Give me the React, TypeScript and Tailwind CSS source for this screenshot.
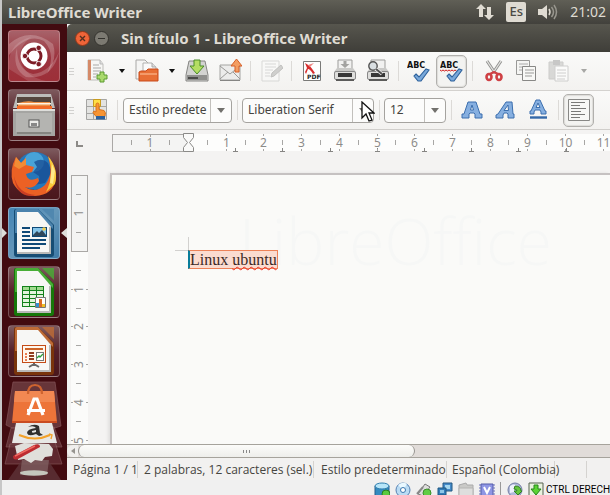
import React, { useEffect, useRef, useState } from "react";

const ui = "font-['Noto_Sans','Open_Sans',sans-serif]";

/* ---------- launcher ---------- */

function Tile({ label, tone, children }: { label: string; tone: string; children: React.ReactNode }) {
  return (
    <button
      type="button"
      aria-label={label}
      className={`block size-[52px] shrink-0 overflow-hidden rounded-[4px] border border-white/25 ${tone}`}
    >
      <svg viewBox="1 1 50 50" className="block size-full">
        {children}
      </svg>
    </button>
  );
}

const plum = "bg-linear-to-b from-[#7d5a5e] via-[#552028] to-[#4a171c]";

function DocShape({ edge, dark, children }: { edge: string; dark: string; children: React.ReactNode }) {
  return (
    <>
      <path d="M8 2h22l16 16v29a3 3 0 0 1-3 3H9a3 3 0 0 1-3-3V4a2 2 0 0 1 2-2z" fill={dark} />
      <path d="M34 2h12v12z" fill={edge} opacity=".8" />
      <path d="M7 4a2 2 0 0 1 2-2h21l15 16v4L29 6H9v20H7z" fill={edge} />
      <path d="M9 5h21l13 15v27H9z" fill="#f7f7f5" />
      <path d="M9 45h34v2H9zM41 20h2v26h-2z" fill="#b9b9b7" />
      {children}
    </>
  );
}

function Launcher() {
  return (
    <nav aria-label="Lanzador" className="relative flex w-[65px] shrink-0 flex-col items-start gap-[7px] overflow-hidden bg-[#420b10] pt-[6px] pl-[6px]">
      <Tile label="Inicio" tone="bg-linear-to-b from-[#a7626a] via-[#9c3540] to-[#9d2f38]">
        <path d="M1 14Q22-4 45 14Q50 30 38 45Q49 25 36 11Q20 2 1 25z" fill="#fff" opacity=".22" />
        <path d="M51 22Q45 50 18 47Q3 38 9 18Q9 40 25 44Q42 42 51 22z" fill="#fff" opacity=".2" />
        <path d="M1 39Q-1 13 23 7Q7 20 14 35Q20 47 38 51H20z" fill="#fff" opacity=".13" />
        <circle cx="26" cy="26" r="13.5" fill="#fff" />
        <circle cx="26" cy="26" r="7" fill="none" stroke="#7d1c26" strokeWidth="3" />
        <g stroke="#fff" strokeWidth="1.4">
          <path d="M26 26h-11M26 26l6-10M26 26l6 10" />
        </g>
        <circle cx="26" cy="26" r="5" fill="#fff" />
        <g fill="#7d1c26" stroke="#fff" strokeWidth=".8">
          <circle cx="17" cy="26" r="2.7" />
          <circle cx="30.7" cy="17.9" r="2.7" />
          <circle cx="30.7" cy="34.1" r="2.7" />
        </g>
      </Tile>
      <Tile label="Archivos" tone={plum}>
        <path d="M9 5h34l4 14H5z" fill="#bcbcb9" />
        <path d="M9 8h34v10H9z" fill="#54453d" />
        <path d="M10 14q10-3 16-1h16v8H10z" fill="#ee9147" />
        <path d="M9 14h34v1.5H9z" fill="#fff3e3" />
        <path d="M9 17h35v5H9z" fill="#f36b27" />
        <path d="M5 20h42v27H5z" fill="#a5a5a2" />
        <path d="M5 20h42v2H5z" fill="#dededb" />
        <path d="M8 24h36v19H8z" fill="#b4b4b1" />
        <rect x="21" y="31" width="10" height="7" fill="#ececea" stroke="#555" />
        <path d="M23 34h6v3h-6z" fill="#888" />
        <path d="M9 43h34v2H9z" fill="#858581" />
      </Tile>
      <Tile label="Firefox" tone={plum}>
        <circle cx="27" cy="23" r="19" fill="#2577ba" />
        <circle cx="26" cy="14" r="10" fill="#54b2e2" opacity=".75" />
        <path d="M26 14q8-5 14 1l4 9-7 11-11 2q7-4 5-9l-6-4 4-5z" fill="#174b91" opacity=".75" />
        <path d="M40 9q9 11 8 22-3 16-21 17Q12 48 5 35 1 22 8 9l5 6 5-5v7l8 2-2 5-6 2q2 9 12 4l1 3q-5 9-14 6 10 7 20-2 9-11 3-28z" fill="#ec6124" />
        <path d="M40 8q11 13 7 28l-9 8q9-18 2-36z" fill="#f8c93a" />
        <path d="M6 28q4 18 22 19-19 5-22-19z" fill="#c93e23" />
        <path d="M8 9l5 6 5-5v7l-7 4-5-3z" fill="#f28c35" />
        <path d="M44 16l3 7-2 13-3-1 1-10z" fill="#ffe888" />
      </Tile>
      <Tile label="LibreOffice Writer" tone="bg-linear-to-br from-[#4284b4] via-[#6597b9] to-[#3d79a6]">
        <DocShape edge="#4b83ad" dark="#174d74">
          <g fill="#0e4977">
            <path d="M14 20h8v2h-8zM14 24h8v2h-8zM14 28h8v2h-8zM14 32h24v2H14zM14 36h24v2H14zM14 40h18v2H14z" />
            <path d="M24 20h15v10H24z" />
          </g>
          <path d="M25 21h13v8H25z" fill="#85c5e9" />
          <circle cx="36" cy="22" r="1.8" fill="#f6cd4c" />
          <path d="M25 28l4-4 2 2 3-3 4 5v1H25z" fill="#30475a" />
        </DocShape>
      </Tile>
      <Tile label="LibreOffice Calc" tone={plum}>
        <DocShape edge="#48ae35" dark="#167809">
          <path d="M14 20h22v21H14z" fill="#13821b" />
          {[21, 25, 29, 33, 37].map((y) => (
            <path key={y} d={`M15 ${y}h6v3h-6zM22 ${y}h6v3h-6zM29 ${y}h6v3h-6z`} fill={y === 21 ? "#a1db8f" : "#e4f4dd"} />
          ))}
          <path d="M27.5 31.5h10v10h-10z" fill="#fff" stroke="#777" />
          <path d="M28 37h3v4h-3z" fill="#3492d1" />
          <path d="M31 33h3v8h-3z" fill="#d96c24" />
          <path d="M34 38h3v3h-3z" fill="#edbe26" />
        </DocShape>
      </Tile>
      <Tile label="LibreOffice Impress" tone={plum}>
        <DocShape edge="#be6b36" dark="#79340b">
          <rect x="14.5" y="20.5" width="23" height="17" fill="#fff7ed" stroke="#c44b17" />
          <path d="M17 23h18v2H17z" fill="#cd6427" />
          <path d="M17 28h2v2h-2zM17 31h2v2h-2zM17 34h2v2h-2z" fill="#e97c50" />
          <path d="M21 27h5v2h-5zM21 30h5v2h-5zM21 33h5v2h-5z" fill="#8f3b1d" />
          <rect x="28.5" y="27.5" width="7" height="8" fill="#fff" stroke="#777" />
          <path d="M29 33l2-2 1 1 3-3" fill="none" stroke="#2c9d39" strokeWidth="1.3" />
          <path d="M26 38v2M26 39l-5 3M26 39l5 3" stroke="#666" strokeWidth="2" />
        </DocShape>
      </Tile>
      <button type="button" aria-label="Más aplicaciones" className="-mt-[3px] -ml-[6px] block w-[65px] shrink-0">
        <svg width="65" height="100" viewBox="2 381 65 100" className="block">
          <path d="M13 382h42l6 44-6 2H12l-6-3z" fill="#86585c" opacity=".55" stroke="#b78d90" strokeWidth=".7" />
          <path d="M11 428l-5 19h56l-8-20z" fill="#79484d" opacity=".6" stroke="#a77e80" strokeWidth=".7" />
          <path d="M10 444l-5 20h57l-7-22z" fill="#713b42" opacity=".6" stroke="#a77e80" strokeWidth=".7" />
          <path d="M22 460l-14 20h53l-13-20z" fill="#5e3338" opacity=".8" />
          <path d="M22 460h27l-2 15H20z" fill="#9a8181" opacity=".45" />
          <ellipse cx="34" cy="473" rx="14" ry="2.7" fill="#c4c7bd" />
          <path d="M15 446l9-3 25 1 4 5-1 7-7 1-3 4-7-1-4 3-7-4-6 1z" fill="#e0dfdb" />
          <path d="M13 456l21-11q6-2 6 2l-22 12q-5 2-5-3z" fill="#bd2c31" />
          <path d="M15 456l20-10" stroke="#f06b63" strokeWidth="1.5" />
          <path d="M16 423h36l5 20H12z" fill="#e7e7e5" />
          <path d="M28 427q6-4 11-1l1 7 3 2-4 1-3-2q-8 3-9-1 0-4 9-5-2-3-8-1zm4 4q-1 3 4 1v-2z" fill="#302f2d" fillRule="evenodd" />
          <path d="M19 435q16 7 31 0" fill="none" stroke="#f3a129" strokeWidth="2" />
          <path d="M49 434l3 1-1 4" fill="none" stroke="#f3a129" strokeWidth="1.4" />
          <path d="M15 391h39l3 32H12z" fill="#ed7439" />
          <path d="M15 391h39l1 11H14z" fill="#f28852" />
          <path d="M28 394q0-9 7-9 7 0 7 9" fill="none" stroke="#ce632f" strokeWidth="2.2" />
          <path d="M28 415l6-16h3l6 16" fill="none" stroke="#fff" strokeWidth="3.2" />
          <path d="M27 409h18v3H27z" fill="#fff" />
          <path d="M12 421h45v2H12z" fill="#c94c21" />
        </svg>
      </button>
      <svg aria-hidden="true" width="65" height="12" viewBox="0 0 65 12" className="absolute top-[203px] left-0">
        <path d="M0 1v10l5-5zM65 1v10l-6-5z" fill="#deddd9" />
      </svg>
    </nav>
  );
}

/* ---------- tool bar parts ---------- */

function Tool({ label, children, on = false }: { label: string; children: React.ReactNode; on?: boolean }) {
  return (
    <button
      type="button"
      aria-label={label}
      aria-pressed={on || undefined}
      className={
        on
          ? "mx-px flex h-[33px] w-[31px] shrink-0 items-center justify-center rounded-[5px] border border-[#b1b0ad] bg-[#f3f3f1] shadow-[inset_0_0_1px_1px_#dddcd9]"
          : "flex h-[33px] w-[33px] shrink-0 items-center justify-center"
      }
    >
      <svg width="24" height="24" viewBox="0 0 24 24" className="block shrink-0">
        {children}
      </svg>
    </button>
  );
}

function Drop({ label, faint = false }: { label: string; faint?: boolean }) {
  return (
    <button type="button" aria-label={label} className="flex h-[33px] w-[17px] shrink-0 items-center justify-center">
      <svg width="6" height="4" viewBox="0 0 6 4">
        <path d="M0 0h6L3 4z" fill={faint ? "#a7a7a5" : "#111"} />
      </svg>
    </button>
  );
}

function Sep() {
  return (
    <span className="flex w-2 shrink-0 justify-center">
      <span className="h-5 w-px bg-[#dcdad7]" />
    </span>
  );
}

function Grip() {
  return (
    <span className="flex w-[13px] shrink-0 flex-col items-start gap-[2px] pl-[2px]">
      <i className="h-px w-[5px] bg-[#d2d1cf]" />
      <i className="h-px w-[5px] bg-[#d2d1cf]" />
      <i className="h-px w-[5px] bg-[#d2d1cf]" />
    </span>
  );
}

function Combo({ label, value, width, text = "text-[12px]" }: { label: string; value: string; width: string; text?: string }) {
  return (
    <div className={`flex h-[25px] shrink-0 overflow-hidden rounded-[4px] border border-[#a5a39f] bg-[#fcfcfb] ${width}`}>
      <input
        aria-label={label}
        defaultValue={value}
        className={`min-w-0 flex-1 bg-transparent pl-[5px] text-[#45443f] outline-none ${text}`}
      />
      <button type="button" aria-label={`Abrir ${label}`} className="flex w-[21px] shrink-0 items-center justify-center border-l border-[#c2c0bc]">
        <svg width="8" height="5" viewBox="0 0 8 5">
          <path d="M0 0h8L4 5z" fill="#72716d" />
        </svg>
      </button>
    </div>
  );
}

const check = <path d="M9 15l3 3 7-8 3 1-8 11h-3l-4-5z" fill="#79a8da" stroke="#2d619b" strokeWidth="1.1" />;

function Abc({ wavy = false }: { wavy?: boolean }) {
  return (
    <>
      <text x="0" y="9" className="font-['DejaVu_Sans',sans-serif] text-[8px] font-bold" fill="#111">
        ABC
      </text>
      {wavy && <path d="M0 11l1.5 1 1.5-1 1.5 1 1.5-1 1.5 1 1.5-1 1.5 1 1.5-1 1.5 1 1.5-1 1.5 1" stroke="#d21b1b" fill="none" />}
      {check}
    </>
  );
}

function Printer({ children }: { children: React.ReactNode }) {
  return (
    <>
      <path d="M5 1h14v11H5z" fill="#f1f1f0" stroke="#9d9d9b" />
      <path d="M4 9l-3 4h22l-3-4z" fill="#c9c9c7" />
      <rect x="1.5" y="12.500" width="21" height="8" rx="1.500" fill="#dededc" stroke="#888" />
      <path d="M5 14h14v4H5z" fill="#383838" />
      <path d="M3 20h18v2H3z" fill="#5b5b5a" />
      {children}
    </>
  );
}

function StandardBar() {
  return (
    <div role="toolbar" aria-label="Estándar" className="flex h-[39px] shrink-0 items-center overflow-hidden border-b border-[#d4d2cf] bg-linear-to-b from-[#fafaf9] to-[#f3f2f0]">
      <Grip />
      <Tool label="Nuevo">
        <path d="M3 1h12l3 4v16H3z" fill="#f6f6f4" stroke="#bebdb9" />
        <path d="M3 1h3v20H3z" fill="#d58a68" />
        <path d="M15 1v4h3" fill="#ddd" stroke="#bbb" />
        <path d="M8 6h6M8 9h8M8 12h8M8 15h5M8 18h3" stroke="#aaa9a7" />
        <path d="M15 13h4v3h3v4h-3v3h-4v-3h-3v-4h3z" fill="#a9d96c" stroke="#5b9a30" />
      </Tool>
      <Drop label="Opciones de Nuevo" />
      <Tool label="Abrir">
        <path d="M1 20V1h9l3 3v16z" fill="#f5f5f4" stroke="#a9a8a6" />
        <path d="M8 10V4h9l4 4v6H8z" fill="#fafafa" stroke="#b1b1af" />
        <path d="M17 4v4h4" fill="#ddd" stroke="#aaa" />
        <path d="M4 22V13l2-1h5l2-2h10v12z" fill="#e86f35" stroke="#c94b1b" />
        <path d="M5 14h17v2H5z" fill="#f49a69" />
      </Tool>
      <Drop label="Opciones de Abrir" />
      <Tool label="Guardar">
        <path d="M4 2h16l3 14v6H1v-6z" fill="#d3d3d1" stroke="#858583" />
        <path d="M2 16h20v5H2z" fill="#8f8f8d" />
        <path d="M3 18h10v2H3z" fill="#4b4b49" />
        <path d="M9 1h6v6h4l-7 8-7-8h4z" fill="#b4de63" stroke="#4b8c28" />
      </Tool>
      <Tool label="Enviar por correo">
        <path d="M2 6h20v15H2z" fill="#ececeb" stroke="#a4a4a2" />
        <path d="M2 7l10 8 10-8M2 20l8-7M22 20l-7-7" fill="none" stroke="#999997" />
        <path d="M2 21.500h20" stroke="#858583" />
        <path d="M17 13V7h-4l5.500-7L24 7h-3v6z" fill="#f39d62" stroke="#d65f28" />
      </Tool>
      <Sep />
      <Tool label="Editar archivo">
        <g opacity=".5">
          <path d="M3 2h17v20H3z" fill="#fafaf9" stroke="#bdbdbb" />
          <path d="M6 5h11M6 8h11M6 11h8M6 14h5M6 17h5" stroke="#bbb" />
          <path d="M12 18l1-4 9-8 2 3-9 8z" fill="#aaaaa8" stroke="#8c8c8a" />
        </g>
      </Tool>
      <Sep />
      <Tool label="Exportar a PDF">
        <path d="M3.500 2.500h17v19h-17z" fill="#fff" stroke="#7a7a78" />
        <path d="M5 4q5 2 10 10l-2 1q-3-5-5-5l-2 5-1-2 2-4z" fill="#d72d2e" />
        <path d="M8 6l6-2-4 4z" fill="#ee8582" />
        <text x="7" y="20" className="font-['DejaVu_Sans',sans-serif] text-[6px] font-bold" fill="#222">PDF</text>
      </Tool>
      <Tool label="Imprimir">
        <Printer>
          <path d="M10.500 2h3v3h3L12 9 7.500 5h3z" fill="#a2a2a0" />
        </Printer>
      </Tool>
      <Tool label="Vista preliminar">
        <Printer>
          <circle cx="7" cy="7" r="4.200" fill="#d9dfe2" stroke="#555" strokeWidth="1.400" />
          <path d="M10 10l6 5" stroke="#fff" strokeWidth="3.500" />
          <path d="M10 10l6 5" stroke="#555" strokeWidth="2.200" />
        </Printer>
      </Tool>
      <Sep />
      <Tool label="Ortografía y gramática">
        <Abc />
      </Tool>
      <Tool label="Revisión automática" on>
        <Abc wavy />
      </Tool>
      <Sep />
      <Tool label="Cortar">
        <path d="M6 2l8 12M20 2l-8 12" stroke="#8f8f8d" strokeWidth="3" />
        <path d="M6 2l8 12M20 2l-8 12" stroke="#e4e4e2" strokeWidth="1.300" />
        <ellipse cx="8" cy="18" rx="2.500" ry="3" fill="none" stroke="#cf4145" strokeWidth="2.600" />
        <ellipse cx="18" cy="18" rx="2.500" ry="3" fill="none" stroke="#cf4145" strokeWidth="2.600" />
        <path d="M9 15l4-2 4 2" fill="none" stroke="#cf4145" strokeWidth="2.400" />
      </Tool>
      <Tool label="Copiar">
        <path d="M2.500 1.500h13v14h-13z" fill="#f5f5f3" stroke="#999997" />
        <path d="M5 5h9M5 8h8M5 11h4" stroke="#aaa" />
        <path d="M8.500 7.500h13v14h-13z" fill="#f8f8f6" stroke="#888886" />
        <path d="M11 11h9M11 14h9M11 17h7" stroke="#9b9b99" />
      </Tool>
      <Tool label="Pegar">
        <g opacity=".5">
          <path d="M2 3h14v17H2z" fill="#bcbcba" stroke="#a4a4a2" />
          <path d="M6 1h7v5H6z" fill="#999" />
          <path d="M8 7h13v15H8z" fill="#fff" stroke="#aaa" />
          <path d="M10 11h9M10 14h9M10 17h9M10 20h8" stroke="#aaa" />
        </g>
      </Tool>
      <Drop label="Opciones de Pegar" faint />
    </div>
  );
}

function FormatBar() {
  return (
    <div role="toolbar" aria-label="Formato" className="flex h-[38px] shrink-0 items-center overflow-hidden bg-linear-to-b from-[#fafaf9] to-[#f3f2f0]">
      <Grip />
      <Tool label="Estilos y formato">
        <path d="M1.500 1.500h20v20h-20z" fill="#e3e3e1" stroke="#a5a5a3" />
        <path d="M8.500 1v21M14.500 1v21M1 8.500h21M1 15.500h21" stroke="#a5a5a3" />
        <path d="M8.500 1.500h7v7h-7z" fill="#ffdf45" stroke="#c89b20" />
        <path d="M11 6.500q0-1.500 1.500-1.500T14 6.500v5l5 1q2 1 1 6h-9l-3-4 1-1.500 2 1z" fill="#f79433" stroke="#d8731c" />
        <path d="M11 18h9v3.500h-9z" fill="#2c609c" />
      </Tool>
      <Sep />
      <div className="flex items-center gap-px pl-[2px]">
        <Combo label="Estilo de párrafo" value="Estilo predete" width="w-[109px]" />
        <Sep />
        <Combo label="Nombre de la fuente" value="Liberation Serif" width="w-[132px]" />
        <Sep />
        <Combo label="Tamaño de la fuente" value="12" width="w-[62px]" />
        <Sep />
      </div>
      <Tool label="Negrita">
        <path d="M8 4h8l4 12h2v4h-7v-4l-1-1h-4l-1 1v4H2v-4h2zM12 7l-1.500 5h3z" fill="#86afe0" stroke="#3c6fae" fillRule="evenodd" />
      </Tool>
      <Tool label="Cursiva">
        <path d="M13 4h6l1 12h1v4h-6v-4l-1-1h-3l-1 2v3H3v-3l2-1zM15 7l-4 5.500h4.500z" fill="#86afe0" stroke="#3c6fae" fillRule="evenodd" />
      </Tool>
      <Tool label="Subrayado">
        <path d="M10 2h4l5 11h1v3h-5v-2l-1-2h-5l-1 2v2H4v-3h1zM12 5l-2 4.500h4z" fill="#86afe0" stroke="#3c6fae" fillRule="evenodd" />
        <path d="M4 19.500h17" stroke="#3468a8" strokeWidth="2.400" />
      </Tool>
      <Sep />
      <Tool label="Alinear a la izquierda" on>
        <path d="M1.500 1.500h21v21h-21z" fill="#f8f8f6" stroke="#888886" />
        <path d="M4 4.500h14M4 7.500h9M4 10.500h15M4 13.500h10M4 16.500h14M4 19.500h9" stroke="#7a7a78" />
      </Tool>
    </div>
  );
}

/* ---------- rulers ---------- */

const UNIT = 37.7;
const range = (n: number) => Array.from({ length: Math.max(0, n) }, (_, i) => i);

function useUnits(side: "width" | "height", start: number, initial: number) {
  const ref = useRef<SVGSVGElement>(null);
  const [units, setUnits] = useState(initial);
  useEffect(() => {
    const node = ref.current;
    if (!node) return;
    const measure = () => setUnits(Math.floor((node.getBoundingClientRect()[side] - start) / UNIT));
    measure();
    const observer = new ResizeObserver(measure);
    observer.observe(node);
    return () => observer.disconnect();
  }, [side, start]);
  return { ref, units };
}

function HorizontalRuler() {
  const { ref, units } = useUnits("width", 121, 11);
  return (
    <svg ref={ref} aria-label="Regla horizontal" width="100%" height="29" className="block shrink-0 border-t border-[#d0cecb]">
      <rect x="122" y="4" width="3000" height="17" fill="#fdfdfc" />
      <path d="M10 11v5h6" fill="none" stroke="#8c8a87" strokeWidth="2" />
      <rect x="45.500" y="4.500" width="76" height="17" fill="#f4f4f3" stroke="#aaa8a6" />
      <path d="M64.500 10v5M102.500 10v5M83.500 4v3M83.500 19v2" stroke="#a4a3a1" />
      <text x="83" y="17" textAnchor="middle" className={`${ui} text-[12px]`} fill="#8d8c8a">1</text>
      {range(units).map((i) => {
        const x = Math.round(121 + UNIT * (i + 1)) + 0.5;
        const half = Math.round(121 + UNIT * (i + 0.5)) + 0.5;
        const tab = Math.round(121 + 47.2 * (i + 1)) + 0.5;
        return (
          <g key={i} stroke="#a8a7a5">
            <path d={`M${half} 10v5M${x} 4v2M${x} 19v2`} />
            <path d={`M${tab} 18v3M${tab - 2.5} 21.500h5`} stroke="#868583" />
            <text x={x} y="17" stroke="none" textAnchor="middle" className={`${ui} text-[12px]`} fill="#8d8c8a">
              {i + 1}
            </text>
          </g>
        );
      })}
      <path d="M116.500 3.500h10v4l-4 5 4 5v4h-10v-4l4-5-4-5z" fill="#fafaf9" stroke="#8b8a88" />
    </svg>
  );
}

function VerticalRuler() {
  const { ref, units } = useUnits("height", 90, 5);
  return (
    <svg ref={ref} aria-label="Regla vertical" width="22" height="100%" className="block h-full w-[22px] shrink-0">
      <rect x="4" y="93" width="17" height="2000" fill="#fbfbfa" />
      <rect x="4.500" y="17.500" width="16" height="76" fill="#f4f4f3" stroke="#aaa8a6" />
      <path d="M9 36.500h5M9 74.500h5" stroke="#a4a3a1" />
      <text transform="translate(16 55) rotate(-90)" textAnchor="middle" className={`${ui} text-[12px]`} fill="#8d8c8a">1</text>
      {range(units).map((i) => {
        const y = Math.round(93 + UNIT * (i + 1)) + 0.5;
        const half = Math.round(93 + UNIT * (i + 0.5)) + 0.5;
        return (
          <g key={i} stroke="#a8a7a5">
            <path d={`M9 ${half}h5M4 ${y}h2M19 ${y}h2`} />
            <text transform={`translate(16 ${y}) rotate(-90)`} stroke="none" textAnchor="middle" className={`${ui} text-[12px]`} fill="#8d8c8a">
              {i + 1}
            </text>
          </g>
        );
      })}
    </svg>
  );
}

/* ---------- document ---------- */

function Workspace() {
  return (
    <div className="flex min-h-0 flex-1 overflow-hidden">
      <VerticalRuler />
      <main className="mt-[15px] ml-[21px] min-w-0 flex-1 overflow-hidden border-t-2 border-l-2 border-[#c5c1c1] bg-[#fafaf8] pt-[62px] pl-[63px] shadow-[-2px_0_3px_rgba(0,0,0,0.08)]">
        <div className="relative">
          <span aria-hidden="true" className="absolute -top-7 left-[64px] font-['Open_Sans',sans-serif] text-[64px] leading-[64px] font-light whitespace-nowrap text-[#f6f7f6]">
            LibreOffice
          </span>
          <div className="size-[14px] border-r border-b border-[#d2d1cf]" />
          <p
            contentEditable
            suppressContentEditableWarning
            className="relative -mt-px ml-[13px] w-max border border-l-2 border-[#ed8258] border-l-[#087d9b] bg-[#fbdcd0] font-['Liberation_Serif',serif] text-[16px] leading-[17px] text-[#3c2925] outline-none"
          >
            Linux{" "}
            <span className="underline decoration-[#ee2a20] decoration-wavy decoration-1 underline-offset-1">ubuntu</span>
          </p>
        </div>
      </main>
    </div>
  );
}

function ScrollBar() {
  return (
    <div className="flex h-[14px] shrink-0 border-y border-[#a6a39c] bg-[#e1dcd9]">
      <button type="button" aria-label="Desplazar a la izquierda" className="flex w-[11px] items-center justify-center rounded-l-full bg-[#f0efed]">
        <svg width="4" height="6" viewBox="0 0 4 6">
          <path d="M4 0v6L0 3z" fill="#96948f" />
        </svg>
      </button>
      <div className="flex w-[62%] items-center justify-center gap-[2px] rounded-full border-x border-[#96948f] bg-linear-to-b from-[#fcfcfa] to-[#eeeeeb]">
        <i className="h-[3px] w-px bg-[#888]" />
        <i className="h-[3px] w-px bg-[#888]" />
        <i className="h-[3px] w-px bg-[#888]" />
      </div>
    </div>
  );
}

function StatusBar() {
  const cell = "shrink-0 whitespace-nowrap border-r border-[#d5d3d0] h-[17px] leading-[17px]";
  return (
    <footer className="flex h-[22px] shrink-0 items-center bg-[#f2f1f0] font-['Open_Sans',sans-serif] text-[12px] text-[#464540]">
      <span className={`${cell} w-[71px] pl-[6px]`}>Página 1 / 1</span>
      <span className={`${cell} w-[176px] pl-[6px]`}>2 palabras, 12 caracteres (sel.)</span>
      <span className={`${cell} w-[133px] pl-[7px]`}>Estilo predeterminado</span>
      <span className={`${cell} w-[108px] pl-[5px]`}>Español (Colombia)</span>
      <span className={`${cell} w-8`} />
    </footer>
  );
}

/* ---------- host machine bar ---------- */

function HostIcon({ label, children }: { label: string; children: React.ReactNode }) {
  return (
    <button type="button" aria-label={label} className="block w-[21px] shrink-0">
      <svg width="16" height="16" viewBox="0 0 16 16" className="mx-auto block">
        {children}
      </svg>
    </button>
  );
}

function HostBar() {
  return (
    <div className="flex h-[15px] shrink-0 items-start justify-end overflow-hidden bg-[#f0f0f0] pt-[2px] text-black">
      <HostIcon label="Disco duro">
        <path d="M1 4v9q7 4 14 0V4z" fill="#348bc0" stroke="#275f8b" />
        <ellipse cx="8" cy="4" rx="7" ry="3" fill="#b7e5f8" stroke="#3180b0" />
        <circle cx="12" cy="12" r="4" fill="#5acb3f" stroke="#287f20" />
      </HostIcon>
      <HostIcon label="Unidad óptica">
        <circle cx="8" cy="8" r="7" fill="#b9dbf3" stroke="#5581b3" />
        <path d="M8 8L3 3q5-4 9-1z" fill="#e9f8ff" />
        <circle cx="8" cy="8" r="2.500" fill="#fff" stroke="#3b78af" />
      </HostIcon>
      <HostIcon label="USB">
        <path d="M2 12l7-10 5 3-7 9z" fill="#ddd" stroke="#777" />
        <circle cx="11" cy="11" r="4" fill="#61cd43" stroke="#3d8d2c" />
        <path d="M1 12l6-7" stroke="#888" strokeWidth="2" />
      </HostIcon>
      <HostIcon label="Red">
        <path d="M6 1h9v8H6z" fill="#468bca" stroke="#245881" />
        <path d="M8 3h5v4H8z" fill="#a5d7f0" />
        <path d="M1 6h8v7H1z" fill="#337db9" stroke="#1f5884" />
        <path d="M3 8h4v3H3z" fill="#8dc7e8" />
      </HostIcon>
      <HostIcon label="Carpetas compartidas">
        <path d="M1 3l7-2 1 2h6v12H1z" fill="#c9c9c7" stroke="#aaa" />
        <path d="M1 6h14v9H1z" fill="#dededd" stroke="#b4b4b3" />
      </HostIcon>
      <HostIcon label="Virtualización">
        <path d="M2 2h12v14H2z" fill="#8e96e4" stroke="#555da9" />
        <path d="M0 3h16M0 6h16M0 9h16M0 12h16" stroke="#6970bc" strokeDasharray="2 12" />
        <path d="M5 5l3 6 3-6" fill="none" stroke="#fff" strokeWidth="2" />
      </HostIcon>
      <span className="mx-[3px] h-4 w-px shrink-0 bg-[#999]" />
      <HostIcon label="Ratón">
        <circle cx="8" cy="8" r="7" fill="#b1badb" stroke="#727da3" />
        <path d="M3 4q4-3 7 0l-3 6-4 1z" fill="#eef1fc" />
        <path d="M8 4q6 0 6 5h1l-4 4-4-4h3q0-2-3-2z" fill="#66c73f" stroke="#328024" />
      </HostIcon>
      <HostIcon label="Captura del teclado">
        <path d="M1 1h14v15H1z" fill="#e9f2df" stroke="#566350" />
        <path d="M6 3h4v4h3l-5 6-5-6h3z" fill="#5bd334" stroke="#26851c" />
      </HostIcon>
      <span className="w-[64px] shrink-0 font-['Roboto',sans-serif] text-[10px] leading-4 whitespace-nowrap">CTRL DERECH</span>
    </div>
  );
}

/* ---------- desktop ---------- */

export default function App() {
  return (
    <div className={`relative flex h-screen w-full flex-col overflow-hidden border-l-2 border-[#c7c7c7] bg-[#f0f0f0] ${ui}`}>
      <header className="flex h-6 shrink-0 items-center justify-between bg-linear-to-b from-[#605f56] to-[#42413c] pr-[4px] pl-[6px] text-[#dfdbd2]">
        <span className="text-[15px] leading-5 font-bold">LibreOffice Writer</span>
        <div className="flex items-center gap-[12px]">
          <svg aria-label="Red" width="18" height="16" viewBox="0 0 18 16">
            <path d="M5 0l5 5H7v8H3V5H0zM13 16l5-5h-3V3h-4v8H8z" fill="#dfdbd2" />
          </svg>
          <button type="button" className="flex h-5 w-5 items-center justify-center rounded-[2px] bg-[#dfdbd2] text-[13px] font-medium text-[#4b4a44]">
            Es
          </button>
          <svg aria-label="Volumen" width="20" height="16" viewBox="0 0 20 16">
            <path d="M0 5h4l5-4v14l-5-4H0z" fill="#dfdbd2" />
            <path d="M11 5q2 3 0 6" fill="none" stroke="#dfdbd2" strokeWidth="1.500" />
            <path d="M13.500 3q4 5 0 10M16 1q5 7 0 14" fill="none" stroke="#98968e" strokeWidth="1.500" />
          </svg>
          <time className="text-[14px] leading-5">21:02</time>
        </div>
      </header>
      <div className="flex min-h-0 flex-1">
        <Launcher />
        <section className="relative flex min-w-0 flex-1 flex-col bg-[#f4f3f2]">
          <div className="flex h-7 shrink-0 items-center rounded-tl-[5px] bg-linear-to-b from-[#57564e] to-[#3f3e39] pl-2 text-[#dfdbd2]">
            <button type="button" aria-label="Cerrar" className="flex size-[15px] items-center justify-center rounded-full border border-[#903719] bg-[#ef6438]">
              <svg width="7" height="7" viewBox="0 0 7 7">
                <path d="M1 1l5 5M6 1L1 6" stroke="#55301f" strokeWidth="1.400" />
              </svg>
            </button>
            <button type="button" aria-label="Minimizar" className="ml-1 flex size-[15px] items-center justify-center rounded-full border border-[#33322d] bg-[#7c7a72]">
              <i className="h-px w-[7px] bg-[#33322d]" />
            </button>
            <h1 className="ml-3 text-[15px] leading-5 font-bold">Sin título 1 - LibreOffice Writer</h1>
          </div>
          <StandardBar />
          <FormatBar />
          <HorizontalRuler />
          <Workspace />
          <ScrollBar />
          <StatusBar />
          <svg aria-hidden="true" width="14" height="22" viewBox="0 0 14 22" className="pointer-events-none absolute top-[77px] left-[294px]">
            <path d="M1 1v16l4-4 3 7 3-1-3-7h5z" fill="#fff" stroke="#111" strokeWidth="1.300" />
          </svg>
        </section>
      </div>
      <HostBar />
    </div>
  );
}
